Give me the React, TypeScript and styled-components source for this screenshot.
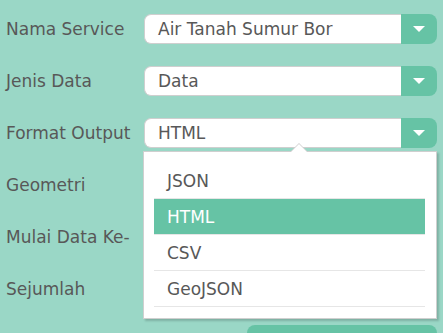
import React from "react";
import styled, { createGlobalStyle } from "styled-components";

const Global = createGlobalStyle`
  html, body { margin: 0; padding: 0; background: #9ad7c6; }
  body { font-family: "DejaVu Sans", Verdana, sans-serif; overflow: hidden; }
`;

const Form = styled.div`
  display: flex;
  flex-direction: column;
  gap: 22px;
  padding: 14px 6px 0 6px;
  width: 443px;
  box-sizing: border-box;
`;

const Row = styled.div`
  display: grid;
  grid-template-columns: 138px 293px;
  align-items: center;
  height: 30px;
`;

const Label = styled.div`
  font-size: 17px;
  color: #585858;
  white-space: nowrap;
`;

const SelectWrap = styled.div`
  position: relative;
  display: flex;
  height: 30px;
`;

const SelectBox = styled.div`
  flex: 1;
  display: flex;
  align-items: center;
  background: #fff;
  border: 1px solid #cfcfcf;
  border-right: none;
  border-radius: 7px 0 0 7px;
  padding-left: 13px;
  font-size: 17px;
  color: #585858;
  box-sizing: border-box;
`;

const ArrowBtn = styled.div`
  width: 36px;
  background: #66c3a5;
  border-radius: 0 8px 8px 0;
  display: flex;
  align-items: center;
  justify-content: center;
`;

const Menu = styled.div`
  position: absolute;
  top: 33px;
  left: -1px;
  right: 0;
  background: #fff;
  border: 1px solid #cfcfcf;
  box-shadow: 2px 2px 2px rgba(0, 0, 0, 0.18);
  padding: 11px 11px 11px 10px;
  z-index: 10;
`;

const Caret = styled.div`
  position: absolute;
  top: -9px;
  left: 146px;
  width: 0;
  height: 0;
  border-left: 9px solid transparent;
  border-right: 9px solid transparent;
  border-bottom: 9px solid #cfcfcf;
  &::after {
    content: "";
    position: absolute;
    left: -8px;
    top: 1px;
    border-left: 8px solid transparent;
    border-right: 8px solid transparent;
    border-bottom: 8px solid #fff;
  }
`;

const Item = styled.div<{ $active?: boolean }>`
  height: 35px;
  display: flex;
  align-items: center;
  padding-left: 13px;
  font-size: 17px;
  color: ${(p) => (p.$active ? "#fff" : "#585858")};
  background: ${(p) => (p.$active ? "#66c3a5" : "#fff")};
  border-bottom: 1px solid #e6e6e6;
`;

const ButtonRow = styled.div`
  display: flex;
  justify-content: flex-end;
  margin-top: -1px;
`;

const Submit = styled.div`
  width: 190px;
  height: 36px;
  background: #66c3a5;
  border-radius: 8px;
  display: flex;
  align-items: flex-start;
  justify-content: flex-start;
  padding: 7px 0 0 63px;
  box-sizing: border-box;
`;

const Arrow = () => (
  <svg width="12" height="6" viewBox="0 0 12 6">
    <path d="M0 0 L12 0 L6 6 Z" fill="#fff" />
  </svg>
);

const Select = ({ value, children }: { value?: string; children?: React.ReactNode }) => (
  <SelectWrap>
    <SelectBox>{value}</SelectBox>
    <ArrowBtn>
      <Arrow />
    </ArrowBtn>
    {children}
  </SelectWrap>
);

export default function App() {
  return (
    <>
      <Global />
      <Form>
        <Row>
          <Label>Nama Service</Label>
          <Select value="Air Tanah Sumur Bor" />
        </Row>
        <Row>
          <Label>Jenis Data</Label>
          <Select value="Data" />
        </Row>
        <Row>
          <Label>Format Output</Label>
          <Select value="HTML">
            <Menu>
              <Caret />
              <Item>JSON</Item>
              <Item $active>HTML</Item>
              <Item>CSV</Item>
              <Item>GeoJSON</Item>
            </Menu>
          </Select>
        </Row>
        <Row>
          <Label>Geometri</Label>
          <Select />
        </Row>
        <Row>
          <Label>Mulai Data Ke-</Label>
          <Select />
        </Row>
        <Row>
          <Label>Sejumlah</Label>
          <Select />
        </Row>
        <ButtonRow>
          <Submit>
            <svg width="18" height="18" viewBox="0 0 18 18">
              <circle cx="9" cy="9" r="8" fill="#fff" />
            </svg>
          </Submit>
        </ButtonRow>
      </Form>
    </>
  );
}
